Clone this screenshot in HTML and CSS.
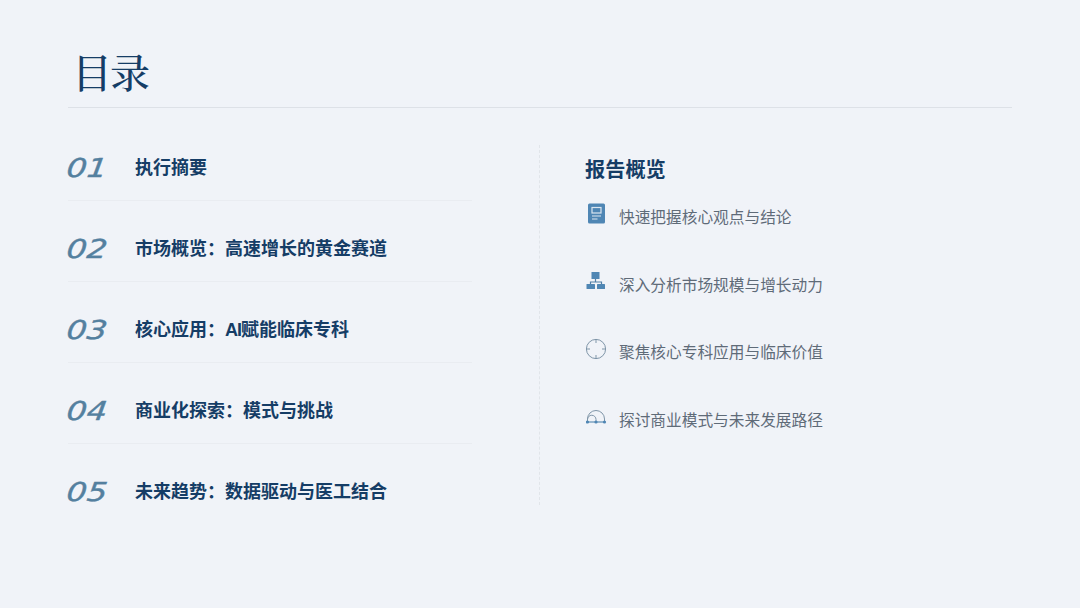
FILE: index.html
```html
<!DOCTYPE html>
<html lang="zh-CN">
<head>
<meta charset="utf-8">
<title>目录</title>
<link rel="stylesheet" href="styles.css">
</head>
<body>
<main class="slide">
  <header class="head"><h1 class="title">目录</h1></header>
  <div class="content">
    <ol class="toc">
      <li class="toc-item"><span class="num">01</span><span class="toc-text">执行摘要</span></li>
      <li class="toc-item"><span class="num">02</span><span class="toc-text">市场概览：高速增长的黄金赛道</span></li>
      <li class="toc-item"><span class="num">03</span><span class="toc-text">核心应用：<span class="latin">AI</span>赋能临床专科</span></li>
      <li class="toc-item"><span class="num">04</span><span class="toc-text">商业化探索：模式与挑战</span></li>
      <li class="toc-item"><span class="num">05</span><span class="toc-text">未来趋势：数据驱动与医工结合</span></li>
    </ol>
    <section class="overview">
      <h2 class="ov-title">报告概览</h2>
      <ul class="ov-list">
        <li class="ov-item">
          <svg class="ico" viewBox="0 0 22 22"><rect x="2" y="0.5" width="17" height="20" rx="1.5" fill="#4f86b4"/><rect x="6" y="4.5" width="9" height="5.5" fill="none" stroke="#dbe6f0" stroke-width="1.2"/><path d="M6 13h9M6 16h5.5" stroke="#dbe6f0" stroke-width="1.2"/></svg>
          <span>快速把握核心观点与结论</span>
        </li>
        <li class="ov-item">
          <svg class="ico" viewBox="0 0 22 22"><rect x="5.5" y="1" width="8" height="7" fill="#4f86b4"/><path d="M9.5 8v3M4.5 13.5v-2.5h11v2.5" fill="none" stroke="#4f7ea6" stroke-width="1.2"/><rect x="0.5" y="13" width="8.5" height="5" rx="0.5" fill="#4f86b4"/><rect x="11" y="13" width="8" height="5" rx="0.5" fill="#4f86b4"/></svg>
          <span>深入分析市场规模与增长动力</span>
        </li>
        <li class="ov-item">
          <svg class="ico" viewBox="0 0 22 22"><circle cx="10" cy="11" r="9.6" fill="none" stroke="#7f95a8" stroke-width="1"/><path d="M10 1v4M10 17v4M0 11h4M16 11h4" stroke="#7f95a8" stroke-width="1"/></svg>
          <span>聚焦核心专科应用与临床价值</span>
        </li>
        <li class="ov-item">
          <svg class="ico" viewBox="0 0 22 22"><path d="M1.5 16V13a8.5 8.5 0 0 1 17 0V16" fill="none" stroke="#7f95a8" stroke-width="1"/><path d="M1.5 16V13.5a4.25 4.25 0 0 1 8.5 0V16" fill="none" stroke="#7f95a8" stroke-width="1"/><path d="M1.5 16h17" stroke="#5f8fb5" stroke-width="1.2"/><circle cx="1.5" cy="16" r="1.6" fill="#4f86b4"/><circle cx="10" cy="16" r="1.6" fill="#4f86b4"/><circle cx="18.5" cy="16" r="1.6" fill="#4f86b4"/></svg>
          <span>探讨商业模式与未来发展路径</span>
        </li>
      </ul>
    </section>
  </div>
</main>
</body>
</html>
```
FILE: styles.css
```css
* { box-sizing: border-box; margin: 0; padding: 0; }
html, body { width: 1080px; height: 608px; overflow: hidden; }
body { background: #f0f3f8; font-family: "Noto Sans CJK SC", "Liberation Sans", sans-serif; }
.slide { width: 1080px; height: 608px; padding: 0 68px; display: flex; flex-direction: column; }
.head { height: 108px; border-bottom: 1px solid #dde1e7; padding-top: 43px; }
.title { font-family: "Noto Serif CJK SC", "Liberation Serif", "Noto Sans CJK SC", serif; font-size: 40px; line-height: 56px; font-weight: 500; color: #153d66; letter-spacing: -2px; padding-left: 4px; }
.content { display: flex; padding-top: 37px; }
.toc { list-style: none; width: 472px; height: 360px; }
.toc-item { width: 404px; height: 56px; margin-bottom: 25px; display: flex; align-items: flex-start; padding-top: 7px; border-bottom: 1px solid #e9ecf1; }
.toc-item:last-child { border-bottom: 0; margin-bottom: 0; }
.num { width: 68px; margin-left: -1px; margin-top: -1px; flex: none; font-family: "DejaVu Sans", sans-serif; font-style: oblique; font-size: 26px; line-height: 34px; color: #54809f; -webkit-text-stroke: 0.4px #54809f; display: block; transform: scaleX(1.22) skewX(-6deg); transform-origin: left center; }
.toc-text { font-family: "Liberation Sans", "Noto Sans CJK SC", sans-serif; font-size: 18px; line-height: 32px; font-weight: 700; color: #153d66; white-space: nowrap; }
.latin { letter-spacing: -1px; }
.overview { padding-left: 45px; border-left: 1px dashed #e1e5ea; height: 360px; flex: 1; margin-left: -1px; }
.ov-title { font-size: 20.2px; line-height: 30px; font-weight: 700; color: #153d66; margin-top: 9px; }
.ov-list { list-style: none; margin-top: 21px; }
.ov-item { height: 67.5px; display: flex; align-items: flex-start; font-size: 15.7px; line-height: 24px; color: #5f6b78; }
.ico { width: 22px; height: 22px; margin-left: 1px; margin-right: 11px; margin-top: -2px; flex: none; }
```
